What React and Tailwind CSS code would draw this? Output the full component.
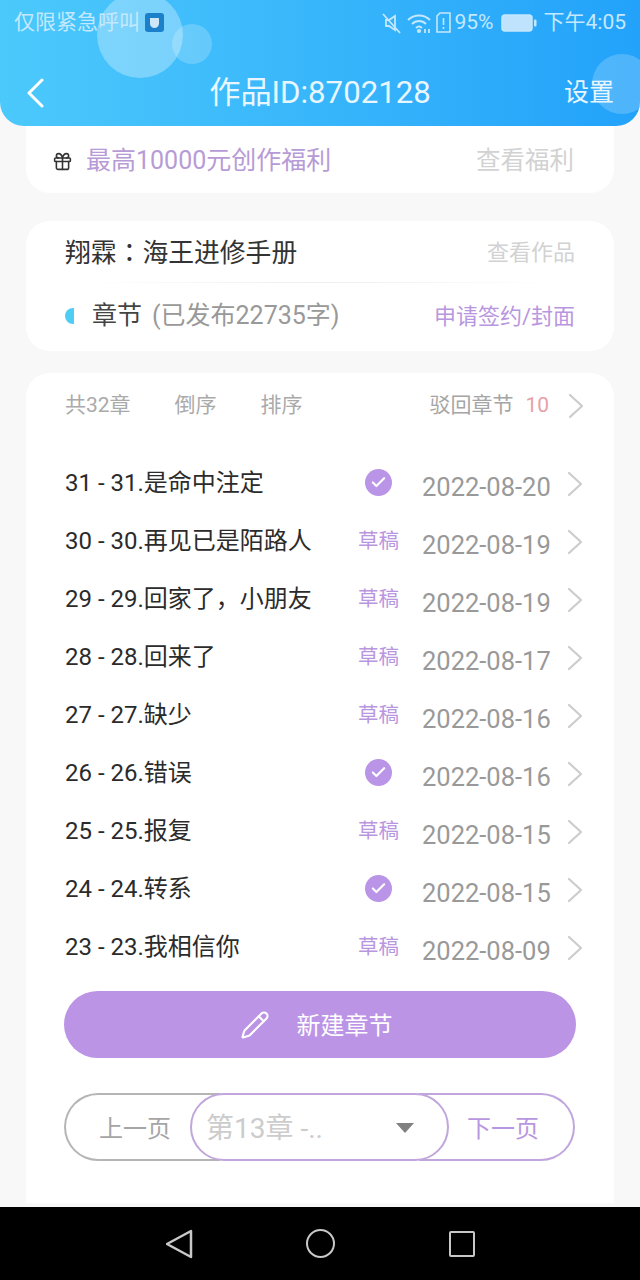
import React from 'react'
import { Gift, Check, Pencil } from 'lucide-react'

const font = { fontFamily: '"Roboto", "Noto Sans CJK SC", sans-serif' }

const chapters = [
    { name: '31 - 31.是命中注定', date: '2022-08-20', done: true },
    { name: '30 - 30.再见已是陌路人', date: '2022-08-19' },
    { name: '29 - 29.回家了，小朋友', date: '2022-08-19' },
    { name: '28 - 28.回来了', date: '2022-08-17' },
    { name: '27 - 27.缺少', date: '2022-08-16' },
    { name: '26 - 26.错误', date: '2022-08-16', done: true },
    { name: '25 - 25.报复', date: '2022-08-15' },
    { name: '24 - 24.转系', date: '2022-08-15', done: true },
    { name: '23 - 23.我相信你', date: '2022-08-09' },
]

function Arrow({ className }) {
    return (
        <svg className={className} width="16" height="26" viewBox="0 0 16 26" fill="none" stroke="#cccccc" strokeWidth="2.2" strokeLinecap="round" strokeLinejoin="round">
            <path d="M2 2l12 11L2 24" />
        </svg>
    )
}

function StatusIcons() {
    return (
        <div className="flex items-center text-[21px] text-[#c4e8fd]">
            <svg width="22" height="22" viewBox="0 0 22 22" fill="none" stroke="currentColor" strokeWidth="1.8">
                <path d="M5 8h3l6-4v14l-6-4H5z" />
                <path d="M2 2l17 19" />
            </svg>
            <svg className="ml-[4px]" width="25" height="22" viewBox="0 0 25 22" fill="none" stroke="currentColor" strokeWidth="1.8">
                <path d="M1 8c6-6 16-6 22 0" />
                <path d="M5 12c4-4 10-4 14 0" />
                <path d="M9 16c2-2 4-2 6 0" />
                <circle cx="12" cy="19" r="1.2" fill="currentColor" />
                <path d="M18 17v4M22 17v4" />
            </svg>
            <svg className="ml-[4px]" width="15" height="21" viewBox="0 0 15 21" fill="none" stroke="currentColor" strokeWidth="1.6">
                <path d="M4 1h10v19H1V4z" />
                <path d="M7.5 6v7M7.5 15v2" />
            </svg>
            <span className="ml-[4px]">95%</span>
            <svg className="ml-[7px]" width="36" height="18" viewBox="0 0 36 18">
                <rect x="1" y="1" width="30" height="16" rx="3" fill="#bfe3fd" stroke="currentColor" strokeWidth="1.5" />
                <rect x="33" y="5.5" width="2.5" height="7" rx="1" fill="currentColor" />
            </svg>
            <span className="ml-[7px]">下午4:05</span>
        </div>
    )
}

function Header() {
    return (
        <div className="relative h-[126px] shrink-0 overflow-hidden rounded-b-[24px] bg-gradient-to-r from-[#4cc9fb] to-[#22a2fa] text-white">
            <div className="absolute left-[97px] top-[-8px] h-[86px] w-[86px] rounded-full bg-white/30" />
            <div className="absolute left-[172px] top-[24px] h-[40px] w-[40px] rounded-full bg-white/20" />
            <div className="absolute left-[592px] top-[54px] h-[60px] w-[60px] rounded-full bg-white/20" />
            <div className="relative flex h-[44px] items-center justify-between px-[14px] pt-[1px]">
                <div className="flex items-center text-[21px] text-[#c4e8fd]">
                    仅限紧急呼叫
                    <span className="ml-[5px] flex h-[19px] w-[19px] items-center justify-center rounded-[3px] bg-[#1c7fc9]">
                        <span className="h-[10px] w-[9px] rounded-b-full bg-[#cfe6f7]" />
                    </span>
                </div>
                <StatusIcons />
            </div>
            <div className="relative grid h-[82px] grid-cols-[1fr_auto_1fr] items-center pl-[26px] pr-[26px] pt-[16px]">
                <svg width="18" height="30" viewBox="0 0 18 30" fill="none" stroke="#ffffff" strokeWidth="3" strokeLinecap="round" strokeLinejoin="round">
                    <path d="M16 2L3 15l13 13" />
                </svg>
                <div className="text-[31.2px] text-[#e8f7ff]">作品ID:8702128</div>
                <div className="text-right text-[25px] text-[#e8f7ff]">设置</div>
            </div>
        </div>
    )
}

function Chapter({ name, date, done }) {
    return (
        <div className="flex h-[58px] items-center whitespace-nowrap">
            <div className="w-[293px] shrink-0 text-[24px] text-[#2b2b2b]">{name}</div>
            <div className="flex w-[41px] shrink-0 justify-center">
                {done ? (
                    <span className="mb-[2px] flex h-[27px] w-[27px] shrink-0 items-center justify-center rounded-full bg-[#ba94e6]">
                        <Check size={17} strokeWidth={3} className="text-white" />
                    </span>
                ) : (
                    <span className="text-[20.5px] text-[#b996e0]">草稿</span>
                )}
            </div>
            <div className="ml-[23px] shrink-0 pt-[9px] text-[25.5px] text-[#999999]">{date}</div>
            <Arrow className="ml-[16px] mt-[1px] shrink-0" />
        </div>
    )
}

export default function App() {
    return (
        <div style={font} className="flex h-[1280px] w-[640px] flex-col overflow-hidden bg-[#f8f8f8]">
            <Header />
            <div className="min-h-0 flex-1 px-[26px]">
                <div className="flex h-[67px] items-center justify-between rounded-b-[24px] bg-white pl-[26px] pr-[40px] pt-[3px]">
                    <div className="flex items-center">
                        <Gift size={21} strokeWidth={1.8} className="text-[#333333]" />
                        <span className="ml-[13px] text-[25px] text-[#b79bd6]">最高10000元创作福利</span>
                    </div>
                    <span className="text-[24.5px] text-[#d2d2d2]">查看福利</span>
                </div>

                <div className="mt-[28px] h-[130px] rounded-[24px] bg-white px-[39px]">
                    <div className="relative flex h-[62px] items-center justify-between">
                        <span className="text-[25.8px] text-[#333333]">
                            翔霖<span className="font-['Noto_Sans_CJK_TC']">：</span>海王进修手册
                        </span>
                        <span className="text-[22px] text-[#d2d2d2]">查看作品</span>
                        <div className="absolute bottom-0 left-[20px] right-[20px] h-px bg-gradient-to-r from-white via-[#eeeeee] to-white" />
                    </div>
                    <div className="flex h-[66px] items-center justify-between">
                        <div className="flex items-center">
                            <span className="h-[16px] w-[9px] rounded-l-full bg-[#4fcdf5]" />
                            <span className="ml-[18px] text-[25px] text-[#444444]">章节</span>
                            <span className="ml-[10px] text-[25px] text-[#999999]">(已发布22735字)</span>
                        </div>
                        <span className="text-[22px] text-[#b996e0]">申请签约/封面</span>
                    </div>
                </div>

                <div className="mt-[22px] h-[830px] rounded-t-[24px] bg-white px-[39px]">
                    <div className="flex h-[65px] items-center whitespace-nowrap text-[21px] text-[#aaaaaa]">
                        <span>共32章</span>
                        <span className="ml-[44px]">倒序</span>
                        <span className="ml-[44px]">排序</span>
                        <span className="ml-auto text-[#a5a5a5]">驳回章节</span>
                        <span className="ml-[12px] text-[#e8a0a8]">10</span>
                        <Arrow className="ml-[19px] -mr-[9px] shrink-0" />
                    </div>
                    <div className="mt-[16px]">
                        {chapters.map((c) => (
                            <Chapter key={c.name} {...c} />
                        ))}
                    </div>

                    <button className="-ml-[1px] mt-[15px] flex h-[67px] w-[512px] items-center justify-center rounded-full bg-[#bb94e6] pr-[8px] text-[24px] text-white">
                        <Pencil size={30} strokeWidth={1.7} />
                        <span className="ml-[27px] pt-[2px]">新建章节</span>
                    </button>

                    <div className="-ml-[1px] mt-[35px] flex h-[68px] w-[511px] whitespace-nowrap">
                        <div className="w-[156px] rounded-l-full border-2 border-r-0 border-[#b5b5b5] pl-[33px] text-[24px] leading-[68px] text-[#a5a5a5]">
                            上一页
                        </div>
                        <div className="relative z-10 -ml-[30px] flex w-[259px] items-center justify-between rounded-full border-2 border-[#c0a6dc] bg-white pl-[14px] pr-[33px]">
                            <span className="pt-[3px] text-[28px] text-[#cccccc]">第13章 -..</span>
                            <span className="mt-[1px] h-0 w-0 border-x-[9px] border-t-[10px] border-x-transparent border-t-[#808080]" />
                        </div>
                        <div className="-ml-[30px] flex-1 rounded-r-full border-2 border-l-0 border-[#c0a6dc] pl-[48px] text-[24px] leading-[68px] text-[#b996e0]">
                            下一页
                        </div>
                    </div>
                </div>
            </div>
            <div className="flex h-[73px] shrink-0 items-center justify-center bg-black text-[#c8c8c8]">
                <svg width="28" height="30" viewBox="0 0 28 30" fill="none" stroke="currentColor" strokeWidth="2.5" strokeLinejoin="round">
                    <path d="M25 2v26L1 15z" />
                </svg>
                <span className="ml-[112px] h-[29px] w-[29px] rounded-full border-[2.5px] border-current" />
                <span className="ml-[114px] h-[26px] w-[26px] rounded-[2px] border-[2.5px] border-current" />
            </div>
        </div>
    )
}
